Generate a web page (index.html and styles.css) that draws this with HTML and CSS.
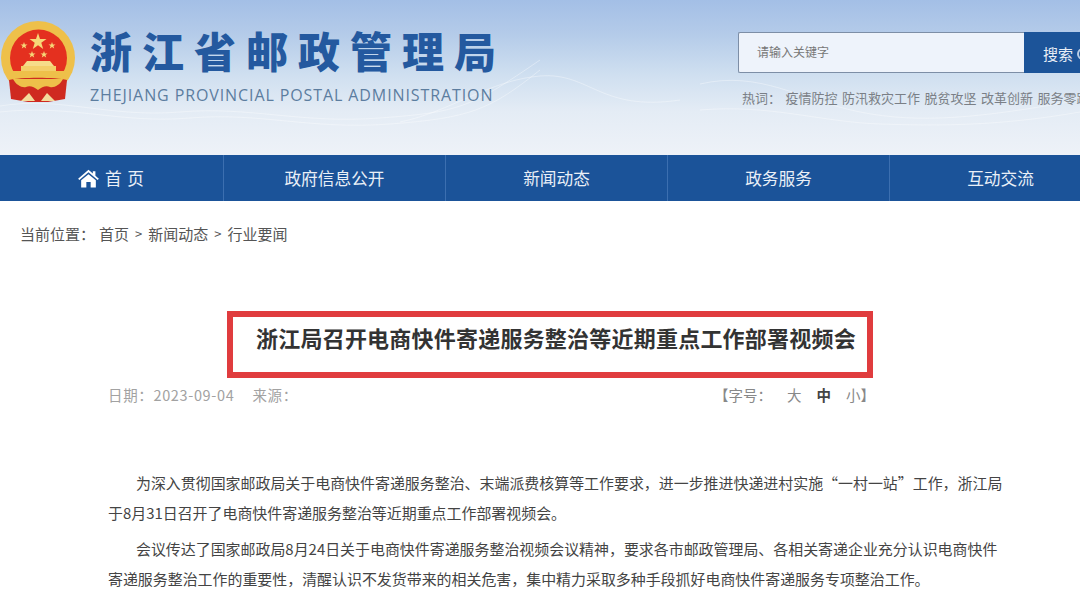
FILE: index.html
```html
<!DOCTYPE html>
<html lang="zh-CN">
<head>
  <meta charset="UTF-8" />
  <title>浙江局召开电商快件寄递服务整治等近期重点工作部署视频会</title>
  <link rel="stylesheet" href="styles.css">
</head>
<body>

  <!-- Header -->
  <header class="top">
    <svg class="waves" viewBox="0 0 1080 155" preserveAspectRatio="none" aria-hidden="true">
      <g fill="none" stroke="#fff" stroke-opacity="0.35">
        <path d="M0 106 C60 96 110 118 180 112 S300 124 380 118 S470 108 540 60" />
        <path d="M0 112 C70 104 120 124 190 118 S310 130 390 124 S490 110 540 70" />
        <path d="M400 122 C450 112 490 80 540 76 S600 112 680 100" />
        <path d="M700 84 C760 70 800 100 860 112 S980 118 1080 100" />
        <path d="M700 110 C770 104 820 122 880 124 S1000 126 1080 112" />
      </g>
    </svg>

    <svg class="emblem" viewBox="0 0 76 82" aria-hidden="true">
      <circle cx="38" cy="37" r="37" fill="#eec04a" />
      <circle cx="38.5" cy="37" r="28.5" fill="#e4301f" />
      <path d="M10 50 H67 V58 H10 Z" fill="#eec04a" />
      <path d="M21 45 H56 V50 H21 Z" fill="#f3cf6a" />
      <path d="M27 40 H50 L54 45 H23 Z" fill="#f6dc8a" />
      <path d="M38 12 L40 18 L46.5 18 L41.3 21.8 L43.2 28 L38 24.2 L32.8 28 L34.7 21.8 L29.5 18 L36 18 Z" fill="#f6d878" />
      <path d="M24 21 l0.9 2.4 2.6 0 -2.1 1.6 0.8 2.5 -2.2 -1.5 -2.2 1.5 0.8 -2.5 -2.1 -1.6 2.6 0 Z" fill="#f6d878" />
      <path d="M52 21 l0.9 2.4 2.6 0 -2.1 1.6 0.8 2.5 -2.2 -1.5 -2.2 1.5 0.8 -2.5 -2.1 -1.6 2.6 0 Z" fill="#f6d878" />
      <path d="M32 30 l0.9 2.4 2.6 0 -2.1 1.6 0.8 2.5 -2.2 -1.5 -2.2 1.5 0.8 -2.5 -2.1 -1.6 2.6 0 Z" fill="#f6d878" />
      <path d="M44 30 l0.9 2.4 2.6 0 -2.1 1.6 0.8 2.5 -2.2 -1.5 -2.2 1.5 0.8 -2.5 -2.1 -1.6 2.6 0 Z" fill="#f6d878" />
      <path d="M9 59 C20 56 56 56 67 59 L65 78 L48 81 H28 L11 78 Z" fill="#cf2a20" />
      <path d="M13 58 H63 C60 64 54 67 50 66 C46 64 42 66 38 69 C34 66 30 64 26 66 C22 67 16 64 13 58 Z" fill="#eec04a" />
      <path d="M21 80 L29 72 L35 80 Z M41 80 L47 72 L55 80 Z" fill="#f3dc9c" />
    </svg>

    <div class="brand">
      <div class="brand-cn">浙江省邮政管理局</div>
      <div class="brand-en">ZHEJIANG PROVINCIAL POSTAL ADMINISTRATION</div>
    </div>

    <div class="search-area">
      <div class="search">
        <div class="search-input">请输入关键字</div>
        <div class="search-btn">搜索<span class="search-ring"></span></div>
      </div>
      <div class="hot">
        <span>热词：</span>
        <span>疫情防控</span>
        <span>防汛救灾工作</span>
        <span>脱贫攻坚</span>
        <span>改革创新</span>
        <span>服务零距离</span>
      </div>
    </div>
  </header>

  <!-- Nav -->
  <nav class="nav">
    <a class="nav-item nav-home">
      <svg class="home-icon" viewBox="0 0 24 22" aria-hidden="true">
        <path d="M12 1 L17 5.2 V2.5 H20 V7.8 L24 11.2 L22.6 12.8 L12 3.9 L1.4 12.8 L0 11.2 Z" fill="#fff" />
        <path d="M12 6 L20.5 13 V21.5 H14.5 V15 H9.5 V21.5 H3.5 V13 Z" fill="#fff" />
      </svg>
      首 页
    </a>
    <a class="nav-item">政府信息公开</a>
    <a class="nav-item">新闻动态</a>
    <a class="nav-item">政务服务</a>
    <a class="nav-item">互动交流</a>
  </nav>

  <!-- Breadcrumb -->
  <div class="crumb">
    <span class="crumb-label">当前位置：</span>
    <span>首页</span><span class="crumb-sep">&gt;</span><span>新闻动态</span><span class="crumb-sep">&gt;</span><span>行业要闻</span>
  </div>

  <!-- Article -->
  <div class="title-wrap">
    <h1 class="title">浙江局召开电商快件寄递服务整治等近期重点工作部署视频会</h1>
  </div>

  <div class="meta">
    <div class="meta-left">
      <span>日期：2023-09-04</span>
      <span>来源：</span>
    </div>
    <div class="meta-right">
      <span>【字号：</span>
      <span>大</span>
      <span class="meta-on">中</span>
      <span>小】</span>
    </div>
  </div>

  <div class="article">
    <p>为深入贯彻国家邮政局关于电商快件寄递服务整治、末端派费核算等工作要求，进一步推进快递进村实施“一村一站”工作，浙江局于8月31日召开了电商快件寄递服务整治等近期重点工作部署视频会。</p>
    <p>会议传达了国家邮政局8月24日关于电商快件寄递服务整治视频会议精神，要求各市邮政管理局、各相关寄递企业充分认识电商快件寄递服务整治工作的重要性，清醒认识不发货带来的相关危害，集中精力采取多种手段抓好电商快件寄递服务专项整治工作。</p>
  </div>

</body>
</html>
```

FILE: styles.css
```css
* {
  box-sizing: border-box;
}

html, body {
  margin: 0;
  height: 100%;
  overflow: hidden;
}

body {
  font-family: "Noto Sans CJK SC", "Liberation Sans", sans-serif;
  background: #fff;
  color: #444;
  width: 1080px;
}

.top {
  position: relative;
  height: 155px;
  display: flex;
  background: linear-gradient(180deg, #a3bfe6 0%, #b4cbe9 22%, #cfdff0 48%, #e4ecf5 72%, #eef2f8 100%);
  overflow: hidden;
}

.waves {
  position: absolute;
  left: 0;
  top: 0;
  width: 100%;
  height: 100%;
}

.emblem {
  position: relative;
  flex: none;
  width: 76px;
  height: 82px;
  margin-top: 21px;
  filter: blur(0.4px);
}

.brand {
  position: relative;
  flex: none;
  width: 648px;
  margin-left: 14px;
  padding-top: 21px;
}

.brand-cn {
  font-size: 42px;
  font-weight: 900;
  line-height: 58px;
  letter-spacing: 10px;
  color: #24599f;
  white-space: nowrap;
}

.brand-en {
  font-family: "Open Sans", sans-serif;
  font-size: 16px;
  line-height: 20px;
  margin-top: 6px;
  letter-spacing: 0.9px;
  color: #5c7d9f;
  white-space: nowrap;
}

.search-area {
  position: relative;
  flex: none;
  width: 342px;
  padding-top: 32px;
}

.search {
  display: flex;
  height: 41px;
}

.search-input {
  flex: none;
  width: 286px;
  background: #eef3fb;
  border: 1px solid #7d8ea6;
  border-right: none;
  border-radius: 2px 0 0 2px;
  padding-left: 18px;
  font-size: 12px;
  line-height: 37px;
  color: #777;
}

.search-btn {
  flex: 1;
  display: flex;
  align-items: center;
  padding: 2px 0 0 19px;
  background: #1c5499;
  color: #e8eef6;
  font-size: 15px;
  white-space: nowrap;
}

.search-ring {
  flex: none;
  width: 12px;
  height: 12px;
  margin-left: 4px;
  border: 2px solid #b9cde6;
  border-radius: 50%;
}

.hot {
  display: flex;
  gap: 4.5px;
  margin: 16px 0 0 4px;
  font-size: 13px;
  line-height: 18px;
  color: #7a7f86;
  white-space: nowrap;
}

.nav {
  display: flex;
  height: 46px;
  background: #1b5399;
}

.nav-item {
  flex: none;
  width: 222px;
  display: flex;
  align-items: center;
  justify-content: center;
  gap: 6px;
  height: 100%;
  font-size: 16.7px;
  color: #e9eff7;
  border-right: 1px solid #3c6fb0;
}

.nav-item:first-child {
  width: 224px;
}

.nav-home {
  letter-spacing: 1px;
}

.home-icon {
  width: 21px;
  height: 19px;
}

.crumb {
  display: flex;
  align-items: center;
  height: 22px;
  margin: 21px 0 0 20px;
  font-size: 15px;
  color: #555;
}

.crumb-label {
  margin-right: 4px;
}

.crumb-sep {
  margin: 0 6px;
  font-size: 13px;
}

.title-wrap {
  display: flex;
  justify-content: center;
  margin: 67px 0 0 0;
  padding-left: 20px;
}

.title {
  width: 646px;
  height: 67px;
  margin: 0;
  border: 6px solid #e03c3e;
  padding-left: 23px;
  font-size: 22px;
  line-height: 41px;
  letter-spacing: 0.22px;
  font-weight: bold;
  color: #333;
  white-space: nowrap;
}

.meta {
  display: flex;
  justify-content: space-between;
  align-items: center;
  height: 20px;
  margin: 6px 205px 0 108px;
  font-size: 14.5px;
  color: #a2a2a2;
}

.meta-left {
  display: flex;
  gap: 18px;
  letter-spacing: 0.65px;
}

.meta-right {
  display: flex;
  gap: 15px;
  color: #888;
}

.meta-on {
  font-weight: bold;
  color: #444;
}

.article {
  margin: 0 75px 0 108px;
  padding-top: 64px;
  font-size: 14.95px;
  line-height: 30px;
  color: #444;
}

.article p {
  margin: 0 0 6px;
  text-indent: 28px;
}
```
